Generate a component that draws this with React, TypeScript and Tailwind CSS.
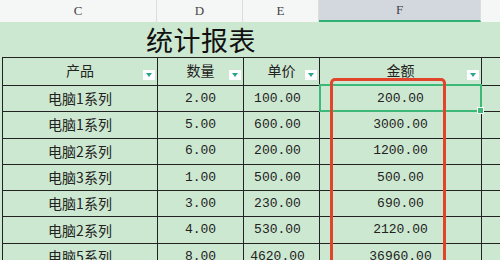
const cjk = { fontFamily: '"Noto Sans CJK SC", "Noto Sans", sans-serif' }
const mono = { fontFamily: '"Liberation Mono", "Noto Sans CJK SC", monospace' }

const rows = [
  ['电脑1系列', '2.00', '100.00', '200.00'],
  ['电脑1系列', '5.00', '600.00', '3000.00'],
  ['电脑2系列', '6.00', '200.00', '1200.00'],
  ['电脑3系列', '1.00', '500.00', '500.00'],
  ['电脑1系列', '3.00', '230.00', '690.00'],
  ['电脑2系列', '4.00', '530.00', '2120.00'],
  ['电脑5系列', '8.00', '4620.00', '36960.00'],
]

function FilterButton() {
  return (
    <span className="absolute bottom-[5px] right-[2px] flex h-[10px] w-[12px] items-center justify-center bg-white">
      <svg width="6" height="4" viewBox="0 0 6 4">
        <path d="M0 0 L6 0 L3 4 Z" fill="#2ba58c" />
      </svg>
    </span>
  )
}

function HeaderCell({ label, width }: { label: string; width: string }) {
  return (
    <div
      className={`relative flex h-full shrink-0 items-center justify-center border-r border-[#222] text-[14px] text-[#222] ${width}`}
      style={cjk}
    >
      <span className="-mt-[2px]">{label}</span>
      <FilterButton />
    </div>
  )
}

export default function App() {
  return (
    <div className="relative h-[260px] w-[500px] overflow-hidden bg-[#cde8d0]">
      {/* column letters */}
      <div
        className="flex h-[22px] bg-[#f5f7f7] text-[13px] text-[#444]"
        style={{ fontFamily: '"Liberation Serif", serif' }}
      >
        <div className="flex w-[157px] items-center justify-center border-r border-[#dcdcdc]">C</div>
        <div className="flex w-[86px] items-center justify-center border-r border-[#dcdcdc]">D</div>
        <div className="flex w-[76px] items-center justify-center border-r border-[#dcdcdc]">E</div>
        <div className="flex w-[162px] items-center justify-center border-b-2 border-r border-b-[#2fb074] border-r-[#dcdcdc] bg-[#d3d8de]">
          F
        </div>
        <div className="flex-1" />
      </div>

      {/* title row */}
      <div className="flex h-[35px] items-center pl-[146px]">
        <span className="text-[27px] leading-none tracking-[0.5px] text-[#111]" style={cjk}>
          统计报表
        </span>
      </div>

      {/* table */}
      <div className="ml-[2px] border-l border-t border-[#222]">
        <div className="flex h-[28px] border-b border-[#222]">
          <HeaderCell label="产品" width="w-[155px]" />
          <HeaderCell label="数量" width="w-[86px]" />
          <HeaderCell label="单价" width="w-[76px]" />
          <HeaderCell label="金额" width="w-[162px]" />
          <div className="flex-1" />
        </div>
        {rows.map((r, i) => (
          <div key={i} className="flex h-[26.3px] border-b border-[#222] text-[13px] text-[#222]">
            <div className="flex w-[155px] shrink-0 items-center justify-center border-r border-[#222] text-[14px]" style={cjk}>
              {r[0]}
            </div>
            <div className="flex w-[86px] shrink-0 items-center justify-center border-r border-[#222]" style={mono}>
              {r[1]}
            </div>
            <div className="flex w-[76px] shrink-0 items-center justify-center border-r border-[#222] pr-[8px]" style={mono}>
              {r[2]}
            </div>
            <div className="flex w-[162px] shrink-0 items-center justify-center border-r border-[#222]" style={mono}>
              {r[3]}
            </div>
            <div className="flex-1" />
          </div>
        ))}
      </div>

      {/* active cell */}
      <div className="absolute left-[319px] top-[84px] h-[28px] w-[163px] border-2 border-[#3cb878]">
        <span className="absolute -bottom-[3px] -right-[3px] h-[5px] w-[5px] bg-[#3cb878] ring-1 ring-white" />
      </div>

      {/* red highlight box */}
      <div className="absolute left-[330px] top-[78px] h-[200px] w-[116px] rounded-[5px] border-[3px] border-[#e1432b]" />
    </div>
  )
}
